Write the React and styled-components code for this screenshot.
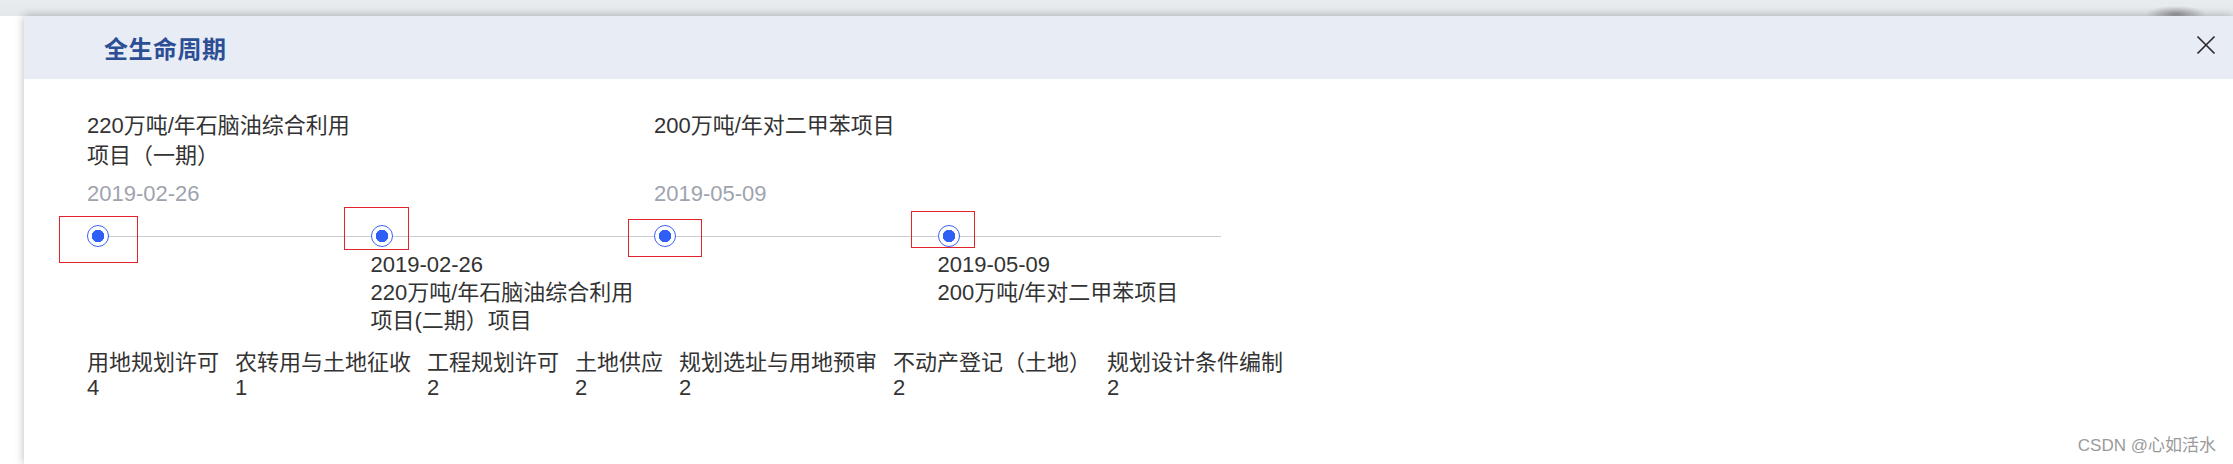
import React from "react";
import styled, { createGlobalStyle } from "styled-components";

const GlobalStyle = createGlobalStyle`
  html, body, #root {
    margin: 0;
    height: 100%;
  }
  body {
    font-family: "Liberation Sans", "Noto Sans CJK SC", sans-serif;
    background: #fff;
    overflow: hidden;
  }
`;

const milestones = [
  {
    title: "220万吨/年石脑油综合利用项目（一期）",
    date: "2019-02-26",
    side: "top",
    mark: { left: -28, top: -9, width: 79, height: 47 },
  },
  {
    title: "220万吨/年石脑油综合利用项目(二期）项目",
    date: "2019-02-26",
    side: "bottom",
    mark: { left: -27, top: -18, width: 65, height: 43 },
  },
  {
    title: "200万吨/年对二甲苯项目",
    date: "2019-05-09",
    side: "top",
    mark: { left: -26, top: -6, width: 74, height: 38 },
  },
  {
    title: "200万吨/年对二甲苯项目",
    date: "2019-05-09",
    side: "bottom",
    mark: { left: -27, top: -14, width: 64, height: 37 },
  },
];

const stats = [
  { label: "用地规划许可", count: 4 },
  { label: "农转用与土地征收", count: 1 },
  { label: "工程规划许可", count: 2 },
  { label: "土地供应", count: 2 },
  { label: "规划选址与用地预审", count: 2 },
  { label: "不动产登记（土地）", count: 2 },
  { label: "规划设计条件编制", count: 2 },
];

const CloseIcon = () => (
  <svg width="20" height="20" viewBox="0 0 20 20">
    <path d="M1.5 1.5 L18.5 18.5 M18.5 1.5 L1.5 18.5" stroke="#2b2b2b" strokeWidth="1.7" fill="none" />
  </svg>
);

const App = () => {
  return (
    <Page>
      <GlobalStyle />
      <Dialog>
        <Header>
          <Title>全生命周期</Title>
          <CloseButton aria-label="close">
            <CloseIcon />
          </CloseButton>
        </Header>
        <Body>
          <Timeline>
            {milestones.map((m, i) => (
              <Node key={i}>
                <TopSlot>
                  {m.side === "top" && (
                    <>
                      <NodeTitle>{m.title}</NodeTitle>
                      <TopDate>{m.date}</TopDate>
                    </>
                  )}
                </TopSlot>
                <Axis>
                  <Dot />
                  <Mark
                    $left={m.mark.left}
                    $top={m.mark.top}
                    $width={m.mark.width}
                    $height={m.mark.height}
                  />
                </Axis>
                <BottomSlot>
                  {m.side === "bottom" && (
                    <>
                      <BottomDate>{m.date}</BottomDate>
                      <BottomTitle>{m.title}</BottomTitle>
                    </>
                  )}
                </BottomSlot>
              </Node>
            ))}
          </Timeline>
          <Stats>
            {stats.map((s) => (
              <Stat key={s.label}>
                <span>{s.label}</span>
                <span>{s.count}</span>
              </Stat>
            ))}
          </Stats>
        </Body>
      </Dialog>
      <Watermark>CSDN @心如活水</Watermark>
    </Page>
  );
};

const Page = styled.div`
  position: relative;
  box-sizing: border-box;
  height: 100%;
  padding: 16px 0 0 24px;
  display: flex;
  background:
    radial-gradient(ellipse 30px 8px at 2176px 14px, rgba(0, 0, 0, 0.35), transparent),
    linear-gradient(#e9ecef 0, #e4e7eb 16px, #fff 16px);
`;

const Dialog = styled.div`
  flex: 1;
  display: flex;
  flex-direction: column;
  background: #fff;
  box-shadow: 0 0 9px rgba(0, 0, 0, 0.28);
`;

const Header = styled.div`
  height: 63px;
  display: flex;
  align-items: center;
  justify-content: space-between;
  padding: 0 17px 0 80px;
  background: #e8ecf5;
`;

const Title = styled.h2`
  margin: 0;
  font-size: 24px;
  font-weight: bold;
  color: #2c4e95;
  letter-spacing: 0.5px;
`;

const CloseButton = styled.button`
  display: flex;
  padding: 0;
  border: 0;
  background: none;
  cursor: pointer;
  margin-top: -6px;
`;

const Body = styled.div`
  padding: 32px 0 0 63px;
  color: #333;
  font-size: 22px;
`;

const Timeline = styled.div`
  display: grid;
  grid-template-columns: repeat(4, 283.5px);
`;

const Node = styled.div`
  display: flex;
  flex-direction: column;
`;

const TopSlot = styled.div`
  height: 98px;
  display: flex;
  flex-direction: column;
  justify-content: space-between;
  line-height: 30px;
`;

const NodeTitle = styled.div`
  width: 272px;
`;

const TopDate = styled.div`
  color: #9ea4ae;
`;

const Axis = styled.div`
  position: relative;
  height: 22px;
  margin-top: 16px;
  background: linear-gradient(#c9ccd3, #c9ccd3) center / 100% 1px no-repeat;
`;

const Dot = styled.div`
  box-sizing: border-box;
  width: 22px;
  height: 22px;
  border-radius: 50%;
  border: 1.5px solid #3a63f3;
  background: radial-gradient(circle, #2f5ff5 0 6px, #fff 6.5px);
`;

const Mark = styled.div`
  position: absolute;
  left: ${(p) => p.$left}px;
  top: ${(p) => p.$top}px;
  width: ${(p) => p.$width}px;
  height: ${(p) => p.$height}px;
  box-sizing: border-box;
  border: 1.3px solid #e3232c;
`;

const BottomSlot = styled.div`
  padding-top: 4px;
  line-height: 28px;
`;

const BottomDate = styled.div``;

const BottomTitle = styled.div`
  width: 272px;
`;

const Stats = styled.div`
  display: flex;
  gap: 16px;
  margin-top: 15px;
  line-height: 25px;
`;

const Stat = styled.div`
  display: flex;
  flex-direction: column;
`;

const Watermark = styled.div`
  position: absolute;
  right: 17px;
  bottom: 8px;
  font-size: 17px;
  color: #9a9a9a;
  text-shadow: 0 0 2px #fff;
`;

export default App;
